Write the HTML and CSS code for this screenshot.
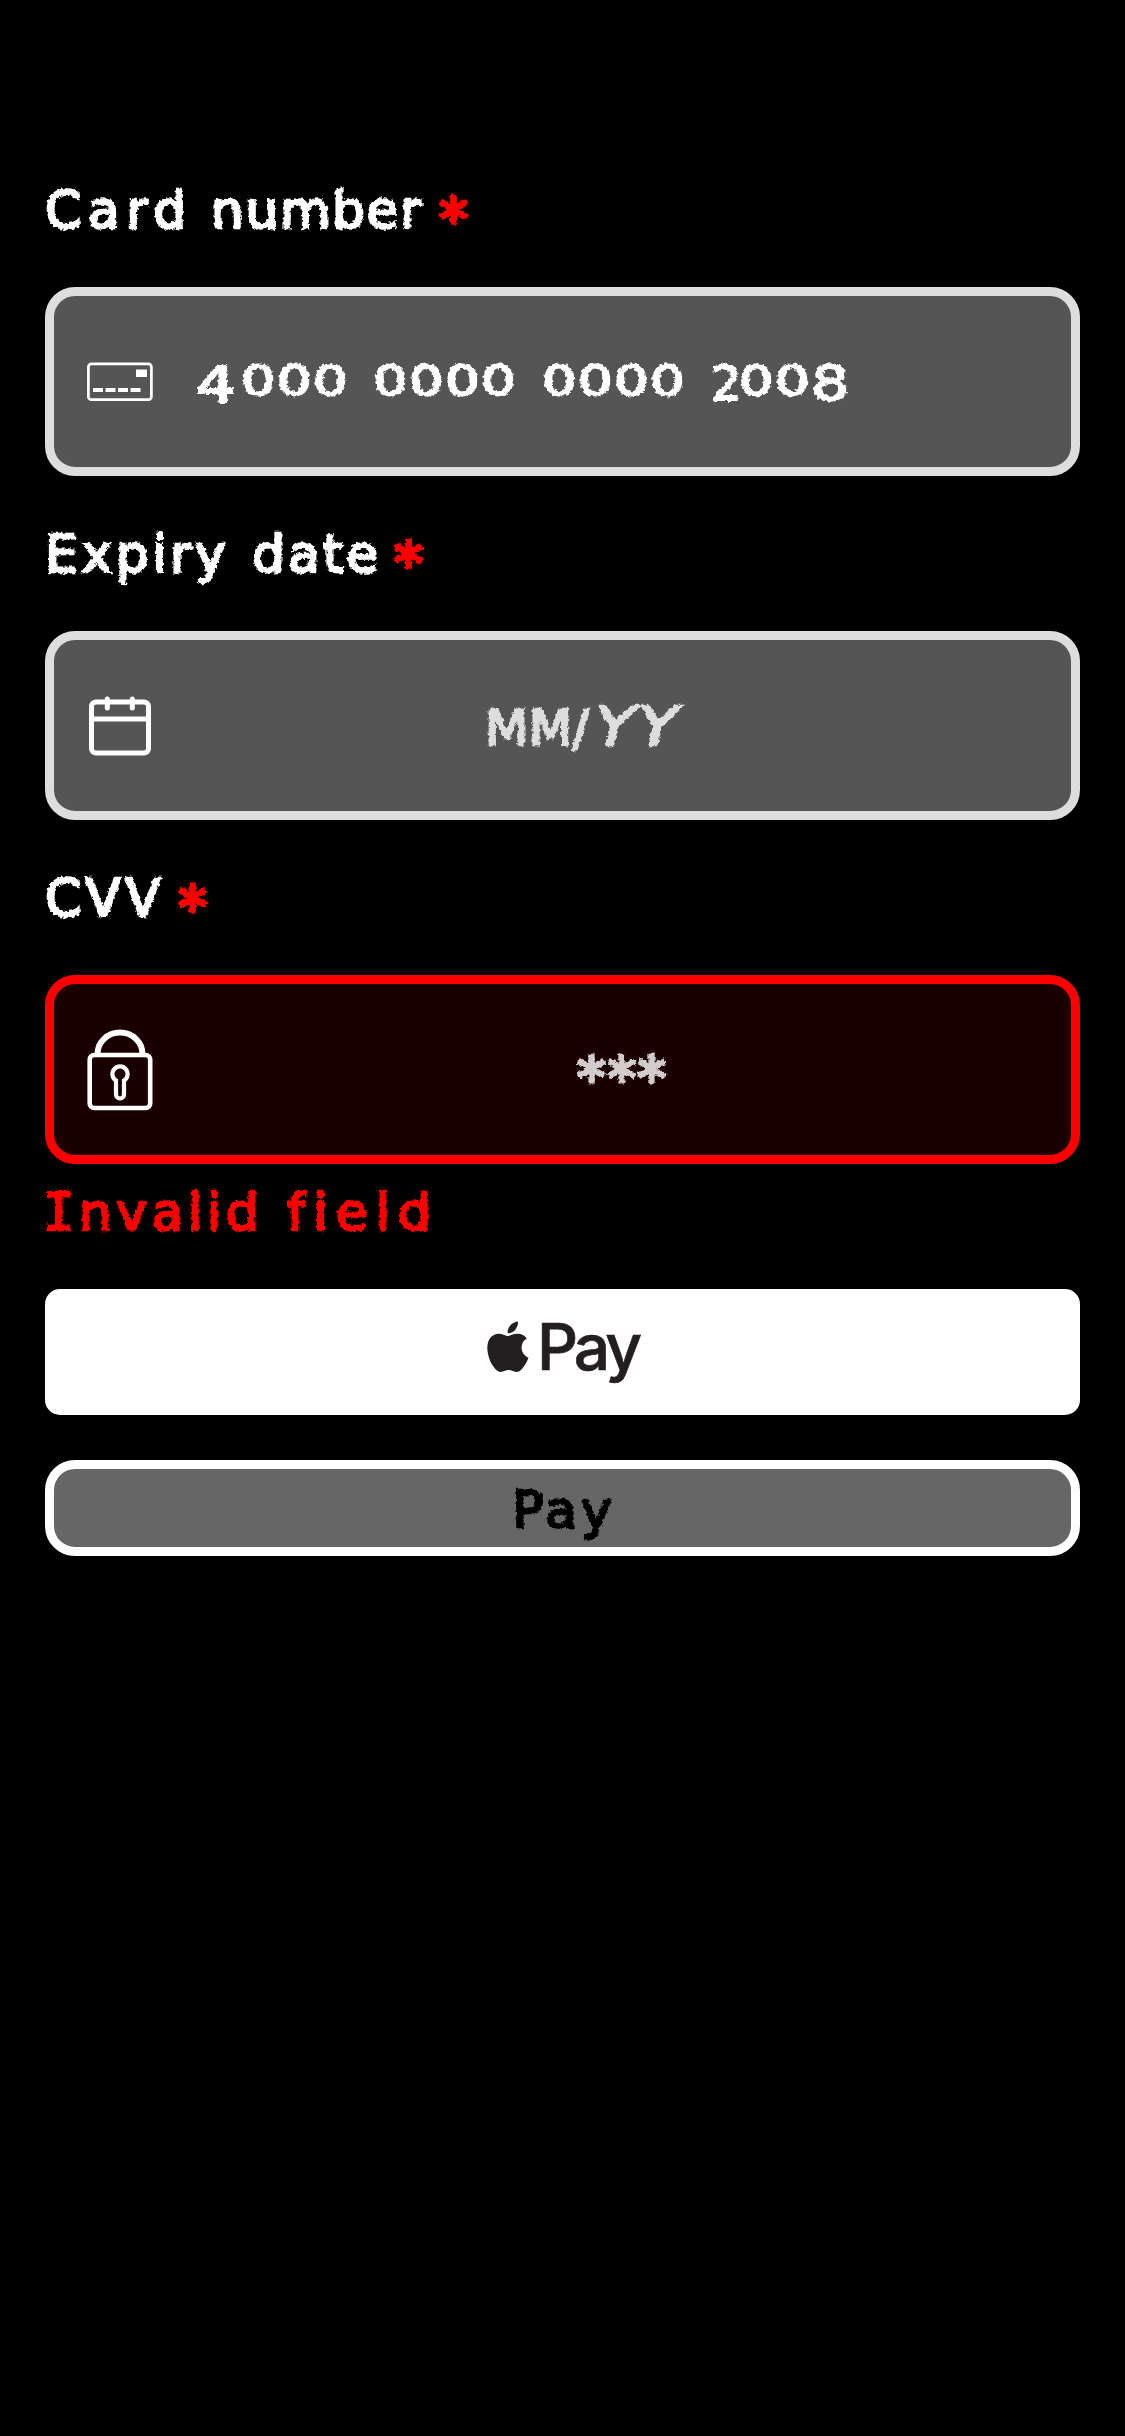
FILE: index.html
```html
<!DOCTYPE html>
<html lang="en">
<head>
<meta charset="utf-8">
<title>Card payment</title>
<link rel="stylesheet" href="styles.css">
</head>
<body>
<svg class="defs" width="0" height="0" aria-hidden="true">
  <filter id="chalk" x="-5%" y="-20%" width="110%" height="140%">
    <feTurbulence type="fractalNoise" baseFrequency="0.28" numOctaves="2" seed="4" result="n"/>
    <feDisplacementMap in="SourceGraphic" in2="n" scale="5" xChannelSelector="R" yChannelSelector="G"/>
  </filter>
</svg>
<main class="form">
  <label class="label chalk"><span class="word w-card">Card</span><span class="word w-number">number</span><span class="star">*</span></label>
  <div class="field">
    <svg class="icon" width="66" height="40" viewBox="0 0 66 40"><rect x="1.4" y="1.9" width="63" height="35.8" rx="3" fill="none" stroke="#fff" stroke-width="2.7"/><path fill="#fff" d="M49 7.500h11v7.500h-11zM6 26h10v4H6zM18.500 26h10v4h-10zM31 26h10v4H31zM43.500 26h10v4h-10z"/></svg>
    <div class="value digits chalk"><span class="d-four">4</span><span class="zeros z3">000</span><span class="zeros z4">0000</span><span class="zeros z4">0000</span><span class="d-two">2</span><span class="zeros z2">00</span><span class="d-eight">8</span></div>
  </div>
  <label class="label chalk"><span class="word w-expiry">Expiry</span><span class="word w-date">date</span><span class="star">*</span></label>
  <div class="field">
    <svg class="icon" width="66" height="62" viewBox="0 0 66 62"><g fill="none" stroke="#fff" stroke-width="5"><rect x="4.500" y="7" width="57" height="51" rx="4.500"/><path d="M4 24h58"/><path stroke-linecap="round" d="M20.300 4v9M45.300 4v9"/></g></svg>
    <div class="value hint date-hint chalk"><span class="mm">MM/</span><span class="yy">YY</span></div>
  </div>
  <label class="label chalk"><span class="word w-cvv">CVV</span><span class="star">*</span></label>
  <div class="field invalid">
    <svg class="icon" width="66" height="82" viewBox="0 0 66 82"><g fill="none" stroke="#fff"><rect x="2.700" y="26" width="60.500" height="53" rx="4.500" stroke-width="4.600"/><path stroke-width="6" d="M10.500 25a22.500 21.500 0 0 1 45 0"/><path stroke-width="4.200" d="M29 51.500a7.600 7.600 0 1 1 8 0v14a4 4 0 0 1-8 0z"/></g></svg>
    <div class="value hint stars chalk">***</div>
  </div>
  <p class="error chalk"><span class="word w-invalid"><span class="serif-i">I</span>nvalid</span><span class="word w-field">field</span></p>
  <button class="apple" type="button">
    <svg class="logo" width="42" height="52" viewBox="0 0 42 52"><path fill="#231f20" d="M31 0.500c.400 3-.900 6-2.700 8.200-1.900 2.200-4.900 3.700-7.600 3.400-.400-2.900 1-6 2.700-7.900C25.300 2.100 28.500.700 31 .500zM30.800 12.800c3.700.100 7 1.800 9 4.800-3.500 2.200-5.300 5.300-5.200 9.200.1 4.700 2.900 8.300 6.900 9.900-1.100 3.200-2.700 6-4.700 8.800-1.900 2.700-4 5.400-7.300 5.400-3.100.1-4.200-1.900-7.900-1.900s-4.900 1.900-7.900 1.900c-3.200.1-5.600-2.900-7.500-5.600C2.300 39.800-.700 30 .700 22.900c1.100-6 5.600-10 11-10.100 3.300-.1 6.300 2.200 8.700 2.200 2.200 0 6.200-2.500 10.400-2.200z"/></svg>
    <span>Pay</span>
  </button>
  <button class="pay" type="button"><span class="chalk pay-text">Pay</span></button>
</main>
</body>
</html>
```
FILE: styles.css
```css
* { box-sizing: border-box; }
body { margin: 0; background: #000; }
.defs { display: block; }
.form {
  display: flex;
  flex-direction: column;
  min-height: 2436px;
  padding: 132px 45px 0;
  color: #fff;
  font: 52px/60px Chalkduster, "DejaVu Sans", sans-serif;
}
.chalk { filter: url(#chalk); -webkit-text-stroke: 2.400px currentColor; }
.label, .error { display: flex; align-items: baseline; margin: 0; }
.label { height: 155px; padding-top: 46px; }
.error { height: 125px; padding-top: 18px; color: #f00; }
.word { white-space: nowrap; }
.w-card { width: 166px; letter-spacing: 6.500px; }
.w-number { width: 228px; letter-spacing: 1.500px; }
.w-expiry { width: 207px; letter-spacing: 3.500px; }
.w-date { width: 142px; letter-spacing: 3px; }
.w-cvv { width: 133px; letter-spacing: 4px; }
.w-invalid { width: 242px; letter-spacing: 4.500px; }
.w-field { letter-spacing: 8px; }
.serif-i { margin-left: -2px; font-family: Chalkduster, "DejaVu Sans Mono", monospace; }
.star { position: relative; top: 12px; color: #f00; font-size: 58px; -webkit-text-stroke-width: 3.500px; }
.field {
  display: flex;
  align-items: center;
  height: 189px;
  padding-left: 33px;
  border: 9px solid #ddd;
  border-radius: 30px;
  background: #555;
}
.invalid { border-color: #f00; background: #1c0000; }
.icon { flex: none; }
.value { display: flex; align-items: baseline; flex: 1; }
.digits { padding-left: 42px; font-size: 48px; margin-top: -5px; -webkit-text-stroke-width: 1.800px; }
.digits > span { transform-origin: 0 60%; }
.zeros { font-size: 40px; letter-spacing: 1px; transform: scaleX(1.36); }
.d-four { width: 46px; font-size: 50px; transform: translateY(7px) scaleX(1.300); }
.z3 { width: 132px; }
.z4 { width: 169px; }
.d-two { width: 28px; transform: translateY(5px); }
.z2 { width: 72px; }
.d-eight { transform: translateY(5px) scaleX(1.250); }
.hint { color: #ddd; }
.date-hint { padding-left: 332px; padding-top: 4px; }
.mm { width: 110px; font-size: 50px; letter-spacing: 0.500px; }
.yy { font-size: 54px; font-style: oblique; letter-spacing: 3px; transform: scaleX(1.200); transform-origin: 0 50%; }
.stars { padding-left: 424px; padding-top: 18px; font-size: 58px; letter-spacing: 1px; color: #d2cccc; -webkit-text-stroke-width: 3px; }
.apple, .pay { display: flex; justify-content: center; align-items: center; padding: 0; }
.apple {
  height: 126px;
  padding-bottom: 11px;
  border: 0;
  border-radius: 15px;
  background: #fff;
  color: #231f20;
  font: 500 64px/80px Inter, sans-serif;
  letter-spacing: -4px;
  gap: 8px;
}
.apple span { -webkit-text-stroke: 0.700px currentColor; }
.pay {
  height: 96px;
  margin-top: 45px;
  border: 9px solid #fff;
  border-radius: 30px;
  background: #666;
  color: #000;
  font: inherit;
}
.pay-text { padding: 3px 0 0 3px; letter-spacing: 4px; }
```
